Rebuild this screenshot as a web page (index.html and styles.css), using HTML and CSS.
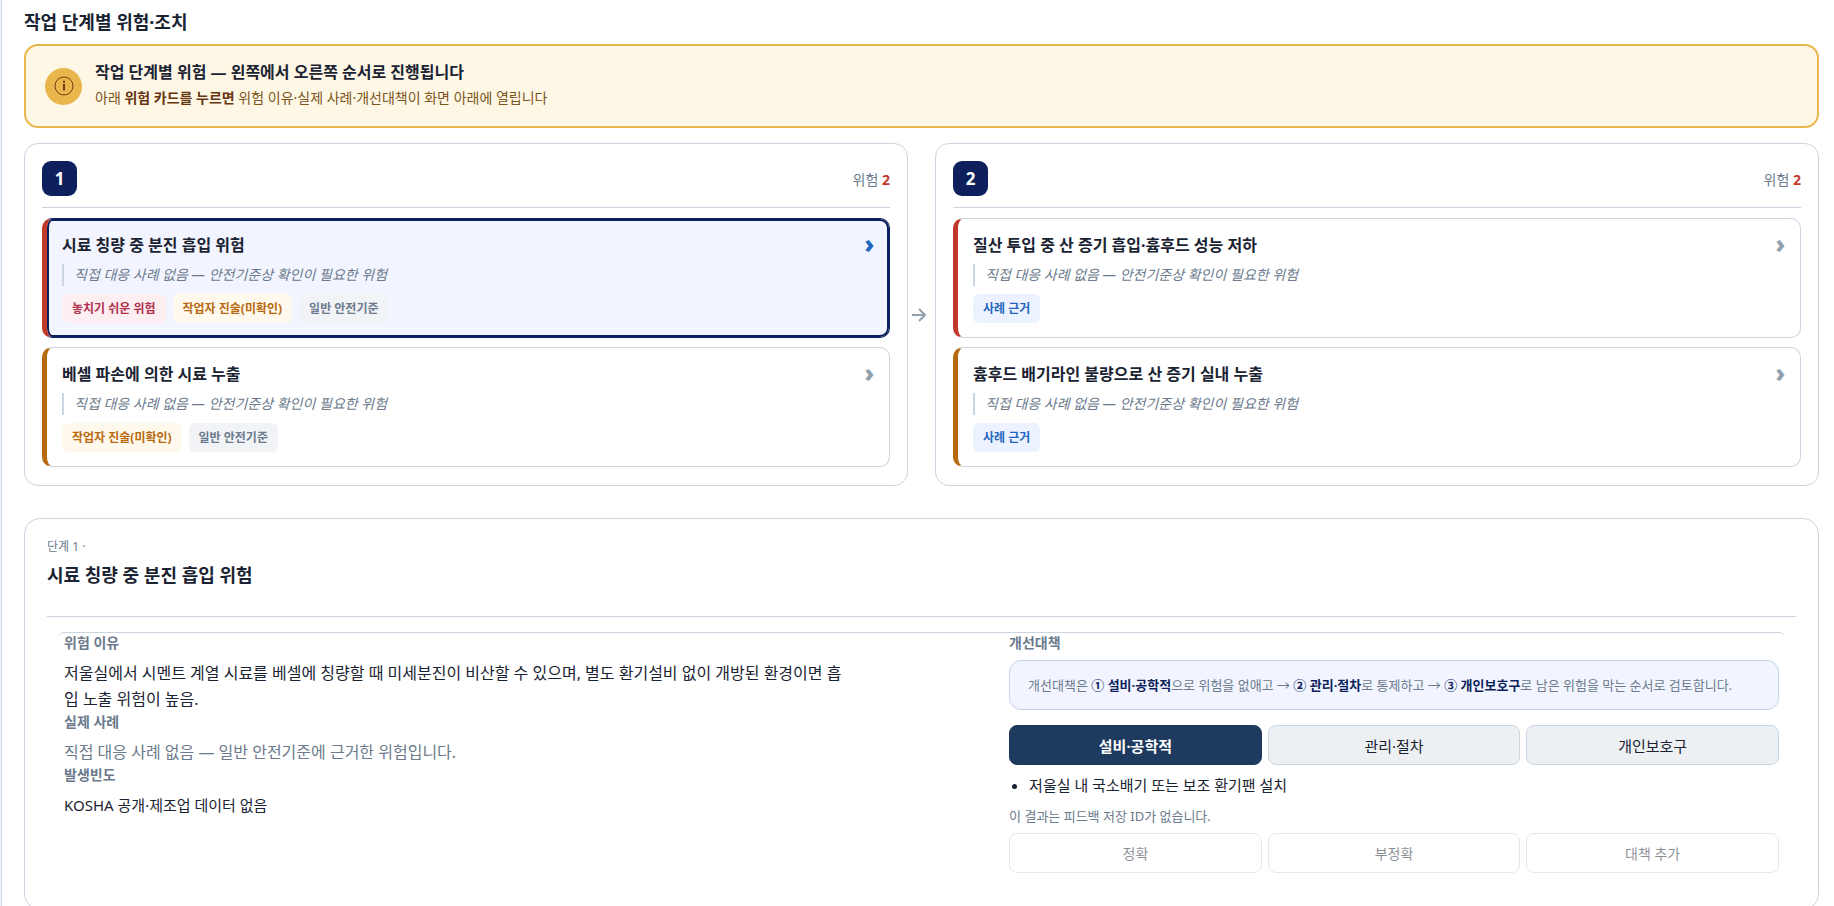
FILE: index.html
```html
<!DOCTYPE html>
<html lang="ko">

<head>
    <meta charset="UTF-8" />
    <meta name="viewport" content="width=device-width, initial-scale=1.0" />
    <title>작업 단계별 위험·조치</title>
    <link rel="stylesheet" href="styles.css">
</head>

<body>
    <main class="panel">
        <h1 class="page-title">작업 단계별 위험·조치</h1>

        <!-- 안내 배너 -->
        <div class="guide">
            <span class="guide-icon">
                <svg viewBox="0 0 20 20" width="20" height="20" fill="none" stroke="currentColor" aria-hidden="true">
                    <circle cx="10" cy="10" r="9" stroke-width="1" />
                    <path d="M10 8v6.5" stroke-width="2" />
                    <path d="M10 4.8v2" stroke-width="2" />
                </svg>
            </span>
            <div class="guide-text">
                <p class="guide-title">작업 단계별 위험 — 왼쪽에서 오른쪽 순서로 진행됩니다</p>
                <p class="guide-sub">아래 <strong>위험 카드를 누르면</strong> 위험 이유·실제 사례·개선대책이 화면 아래에 열립니다</p>
            </div>
        </div>

        <!-- 단계 흐름 -->
        <div class="flow">
            <section class="step">
                <header class="step-head">
                    <span class="step-no">1</span>
                    <span class="step-count">위험 <b>2</b></span>
                </header>
                <button type="button" class="risk high selected">
                    <span class="risk-top"><span class="risk-title">시료 칭량 중 분진 흡입 위험</span><span class="chevron">›</span></span>
                    <span class="risk-quote">직접 대응 사례 없음 — 안전기준상 확인이 필요한 위험</span>
                    <span class="tags">
                        <span class="tag missed">놓치기 쉬운 위험</span>
                        <span class="tag worker">작업자 진술(미확인)</span>
                        <span class="tag general">일반 안전기준</span>
                    </span>
                </button>
                <button type="button" class="risk mid">
                    <span class="risk-top"><span class="risk-title">베셀 파손에 의한 시료 누출</span><span class="chevron">›</span></span>
                    <span class="risk-quote">직접 대응 사례 없음 — 안전기준상 확인이 필요한 위험</span>
                    <span class="tags">
                        <span class="tag worker">작업자 진술(미확인)</span>
                        <span class="tag general">일반 안전기준</span>
                    </span>
                </button>
            </section>

            <svg class="flow-arrow" viewBox="0 0 14 14" width="14" height="14" fill="none" stroke="currentColor" stroke-width="2" aria-hidden="true">
                <path d="M0 7h12.5M7 1l6 6-6 6" />
            </svg>

            <section class="step">
                <header class="step-head">
                    <span class="step-no">2</span>
                    <span class="step-count">위험 <b>2</b></span>
                </header>
                <button type="button" class="risk high">
                    <span class="risk-top"><span class="risk-title">질산 투입 중 산 증기 흡입·흄후드 성능 저하</span><span class="chevron">›</span></span>
                    <span class="risk-quote">직접 대응 사례 없음 — 안전기준상 확인이 필요한 위험</span>
                    <span class="tags">
                        <span class="tag case">사례 근거</span>
                    </span>
                </button>
                <button type="button" class="risk mid">
                    <span class="risk-top"><span class="risk-title">흄후드 배기라인 불량으로 산 증기 실내 누출</span><span class="chevron">›</span></span>
                    <span class="risk-quote">직접 대응 사례 없음 — 안전기준상 확인이 필요한 위험</span>
                    <span class="tags">
                        <span class="tag case">사례 근거</span>
                    </span>
                </button>
            </section>
        </div>

        <!-- 선택한 위험 상세 -->
        <section class="detail">
            <header class="detail-head">
                <p class="detail-step">단계 1 ·</p>
                <h2 class="detail-title">시료 칭량 중 분진 흡입 위험</h2>
            </header>
            <div class="detail-body">
                <div>
                    <h3 class="label">위험 이유</h3>
                    <p class="text">저울실에서 시멘트 계열 시료를 베셀에 칭량할 때 미세분진이 비산할 수 있으며, 별도 환기설비 없이 개방된 환경이면 흡입 노출 위험이 높음.</p>
                    <h3 class="label">실제 사례</h3>
                    <p class="text muted">직접 대응 사례 없음 — 일반 안전기준에 근거한 위험입니다.</p>
                    <h3 class="label">발생빈도</h3>
                    <p class="text small">KOSHA 공개·제조업 데이터 없음</p>
                </div>
                <div>
                    <h3 class="label">개선대책</h3>
                    <p class="order">개선대책은 <strong>① 설비·공학적</strong>으로 위험을 없애고 → <strong>② 관리·절차</strong>로 통제하고 → <strong>③ 개인보호구</strong>로 남은 위험을 막는 순서로 검토합니다.</p>
                    <div class="row">
                        <button type="button" class="tab active">설비·공학적</button>
                        <button type="button" class="tab">관리·절차</button>
                        <button type="button" class="tab">개인보호구</button>
                    </div>
                    <ul class="measures">
                        <li>저울실 내 국소배기 또는 보조 환기팬 설치</li>
                    </ul>
                    <p class="note">이 결과는 피드백 저장 ID가 없습니다.</p>
                    <div class="row">
                        <button type="button" class="feedback" disabled>정확</button>
                        <button type="button" class="feedback" disabled>부정확</button>
                        <button type="button" class="feedback" disabled>대책 추가</button>
                    </div>
                </div>
            </div>
        </section>
    </main>
</body>

</html>
```
FILE: styles.css
```css
/* ====== 기본 ====== */
* {
    box-sizing: border-box;
}

body {
    margin: 0;
    padding-left: 1px;
    background: #f1f4f8;
    color: #1a2332;
    font-family: "Noto Sans", "Noto Sans CJK KR", sans-serif;
    font-size: 16px;
}

h1,
h2,
h3,
p,
ul {
    margin: 0;
}

button {
    font-family: inherit;
    color: inherit;
    cursor: pointer;
}

.panel {
    min-height: 100vh;
    padding: 8px 15px 0 22px;
    background: #fff;
    border-left: 1px solid #cbd5e0;
}

.page-title {
    margin-bottom: 8px;
    font-size: 18px;
    line-height: 28px;
}

/* ====== 안내 배너 ====== */
.guide {
    display: flex;
    align-items: center;
    gap: 13px;
    min-height: 84px;
    padding: 12px 19px;
    background: #fff7e6;
    border: 2px solid #e8b64a;
    border-radius: 14px;
}

.guide-icon {
    display: flex;
    align-items: center;
    justify-content: center;
    flex-shrink: 0;
    width: 37px;
    height: 37px;
    border-radius: 50%;
    background: #e8b64a;
    color: #6b3f10;
}

.guide-text {
    padding-bottom: 4px;
}

.guide-title {
    font-size: 16px;
    font-weight: 700;
    line-height: 28px;
}

.guide-sub {
    font-size: 14px;
    line-height: 24px;
    color: #7a5520;
}

.guide-sub strong {
    color: #663410;
}

/* ====== 단계 흐름 ====== */
.flow {
    display: flex;
    align-items: center;
    margin-top: 15px;
}

.flow-arrow {
    flex-shrink: 0;
    margin: 0 9px 0 4px;
    color: #90a0ae;
}

.step {
    flex: 1;
    display: flex;
    flex-direction: column;
    gap: 9px;
    padding: 17px 17px 18px;
    border: 1px solid #cbd5e0;
    border-radius: 14px;
}

.step-head {
    display: flex;
    align-items: center;
    justify-content: space-between;
    margin-bottom: 1px;
    padding-bottom: 11px;
    border-bottom: 1px solid #cbd5e0;
}

.step-no {
    width: 35px;
    border-radius: 9px;
    background: #0d1f5c;
    color: #fff;
    font-size: 17px;
    font-weight: 700;
    line-height: 35px;
    text-align: center;
}

.step-count {
    font-size: 14px;
    color: #6b7a8c;
}

.step-count b {
    color: #c0392b;
}

.risk {
    display: block;
    width: 100%;
    padding: 12px 15px 14px;
    background: #fff;
    border: 1px solid #cbd5e0;
    border-left: 5px solid #c0392b;
    border-radius: 10px;
    text-align: left;
}

.risk.mid {
    border-left-color: #b7690f;
}

.risk.selected {
    background: #f2f5ff;
    border-color: #0d1f5c;
    border-left-color: #c0392b;
    box-shadow: inset 0 0 0 2px #0d1f5c;
}

.risk-top {
    display: flex;
    align-items: center;
    justify-content: space-between;
    height: 26px;
}

.risk-title {
    font-size: 16px;
    font-weight: 700;
}

.chevron {
    font-family: "Open Sans", sans-serif;
    font-size: 24px;
    font-weight: 800;
    line-height: 26px;
    color: #90a0ae;
}

.risk.selected .chevron {
    color: #1f66c1;
}

.risk-quote {
    display: block;
    margin: 7px 0 8px;
    padding-left: 10px;
    border-left: 2px solid #cbd5e0;
    font-size: 14px;
    font-style: italic;
    line-height: 22px;
    color: #6b7a8c;
}

.tags {
    display: flex;
    gap: 7px;
}

.tag {
    padding: 0 10px;
    border-radius: 6px;
    font-size: 12px;
    font-weight: 700;
    line-height: 29px;
}

.tag.missed {
    background: #fdeef1;
    color: #b03050;
}

.tag.worker {
    background: #fff8ec;
    color: #b7690f;
}

.tag.general {
    background: #f1f3f6;
    color: #6b7a8c;
}

.tag.case {
    background: #ecf2ff;
    color: #1f66c1;
}

/* ====== 상세 ====== */
.detail {
    margin-top: 32px;
    padding: 18px 22px 36px;
    border: 1px solid #cbd5e0;
    border-radius: 16px;
}

.detail-head {
    padding-bottom: 27px;
    border-bottom: 1px solid #cbd5e0;
}

.detail-step {
    font-size: 12px;
    line-height: 20px;
    color: #6b7a8c;
}

.detail-title {
    margin-top: 4px;
    font-size: 18px;
    line-height: 28px;
}

.detail-body {
    display: grid;
    grid-template-columns: 1.06fr 1fr;
    gap: 129px;
    margin: 15px 11px 0;
    padding: 0 6px;
    border-top: 1px solid #cbd5e0;
    border-radius: 6px;
}

.label {
    margin-bottom: 7px;
    font-size: 14px;
    line-height: 20px;
    color: #6b7a8c;
}

.text {
    padding-right: 32px;
    font-size: 16px;
    line-height: 26px;
    word-break: break-all;
}

.text.muted {
    color: #6b7a8c;
}

.text.small {
    font-size: 15px;
}

.order {
    padding: 12px 18px;
    background: #f2f5ff;
    border: 1px solid #c5d2ec;
    border-radius: 12px;
    font-size: 13px;
    line-height: 24px;
    color: #6b7a8c;
}

.order strong {
    color: #0d1f5c;
}

.row {
    display: grid;
    grid-template-columns: repeat(3, 1fr);
    gap: 6px;
}

.order + .row {
    margin-top: 15px;
}

.tab,
.feedback {
    height: 40px;
    border: 1px solid #cbd5e0;
    border-radius: 8px;
    font-size: 15px;
}

.tab {
    background: #ecf0f3;
}

.tab.active {
    background: #1e3a5f;
    border-color: #1e3a5f;
    color: #fff;
    font-weight: 700;
}

.measures {
    margin-top: 8px;
    padding-left: 20px;
    font-size: 15px;
    line-height: 24px;
}

.note {
    margin: 9px 0 7px;
    font-size: 13px;
    line-height: 20px;
    color: #6b7a8c;
}

.feedback {
    background: #fff;
    font-size: 14px;
    opacity: .5;
    cursor: default;
}
```
